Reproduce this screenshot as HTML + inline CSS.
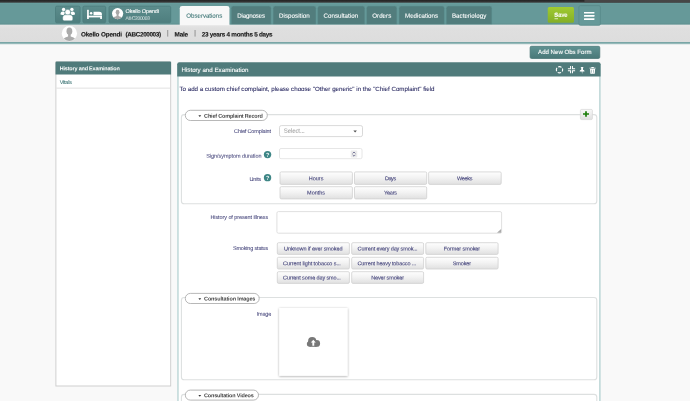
<!DOCTYPE html>
<html lang="en"><head><meta charset="utf-8"><title>Bahmni Clinical - Observations</title>
<style>
html,body{margin:0;padding:0}
body{width:690px;height:401px;overflow:hidden;position:relative;background:#f9f9f9;font-family:"Liberation Sans",sans-serif}
#bg{position:absolute;left:0;top:0;display:block;will-change:transform}
#txt{text-rendering:geometricPrecision}
#txt text{white-space:pre}

</style></head>
<body>
<svg id="bg" width="690" height="401" viewBox="0 0 690 401">
<defs>
<linearGradient id="gbtn" x1="0" y1="0" x2="0" y2="1"><stop offset="0" stop-color="#5c8d8d"/><stop offset="1" stop-color="#4e7e7e"/></linearGradient>
<linearGradient id="gsave" x1="0" y1="0" x2="0" y2="1"><stop offset="0" stop-color="#a0ca31"/><stop offset="1" stop-color="#84af26"/></linearGradient>
<linearGradient id="gadd" x1="0" y1="0" x2="0" y2="1"><stop offset="0" stop-color="#609292"/><stop offset="1" stop-color="#497878"/></linearGradient>
<linearGradient id="gw" x1="0" y1="0" x2="0" y2="1"><stop offset="0" stop-color="#fefefe"/><stop offset=".45" stop-color="#f3f3f3"/><stop offset="1" stop-color="#e0e0e0"/></linearGradient>
<linearGradient id="gplus" x1="0" y1="0" x2="0" y2="1"><stop offset="0" stop-color="#f8f8f8"/><stop offset="1" stop-color="#e0e0e0"/></linearGradient>
<linearGradient id="gbar" x1="0" y1="0" x2="0" y2="1"><stop offset="0" stop-color="#e5e5e5"/><stop offset=".25" stop-color="#dfdfdf"/><stop offset="1" stop-color="#dddddd"/></linearGradient>
<linearGradient id="gstrip" x1="0" y1="0" x2="0" y2="1"><stop offset="0" stop-color="#232323"/><stop offset="1" stop-color="#3d3d3d"/></linearGradient>
<filter id="sh" x="-10%" y="-10%" width="120%" height="125%"><feDropShadow dx="0" dy=".6" stdDeviation=".9" flood-color="#000" flood-opacity=".36"/></filter>
<clipPath id="c1"><circle cx="117.6" cy="13.6" r="5.6"/></clipPath>
<clipPath id="c2"><circle cx="69.4" cy="33.5" r="7.6"/></clipPath>
</defs>

<!-- ===== header ===== -->
<rect x="0" y="0" width="690" height="24.7" fill="#669999"/>
<rect x="0" y="23.7" width="690" height="1" fill="#5c8e8e"/>
<rect x="0" y="2.6" width="690" height=".8" fill="#6ca2a2"/>
<rect x="0" y="0" width="690" height="2.7" fill="url(#gstrip)"/>
<rect x="584.4" y="0" width="105.6" height="2.3" fill="#464646"/>

<!-- header buttons -->
<g stroke="#4b7c7c" stroke-width=".8" fill="url(#gbtn)">
<rect x="55.5" y="6.2" width="24.6" height="16.6" rx="1.4"/>
<rect x="82.9" y="6.2" width="22.8" height="16.6" rx="1.4"/>
<rect x="109" y="6.2" width="61.7" height="16.6" rx="1.4"/>
</g>
<!-- group icon -->
<g fill="#fff">
<circle cx="63.600" cy="9.400" r="1.700"/><circle cx="71.900" cy="9.400" r="1.700"/>
<path d="M60.500 14.500c-.2-1.900.9-3 2.400-3 1 0 1.800.5 2.100 1.300l-1 1.900q-1.800.6-3.500-.2zM75 14.500c.2-1.900-.9-3-2.400-3-1 0-1.800.5-2.100 1.300l1 1.900q1.800.6 3.500-.2z"/>
<circle cx="67.750" cy="12.200" r="2.850" stroke="#568787" stroke-width=".6"/>
<path d="M62.700 19.300v-1.700c0-1.700 1.300-2.800 2.900-2.800h4.300c1.600 0 2.900 1.100 2.900 2.800v1.700q0 1.400-1.500 1.400h-7.100q-1.500 0-1.500-1.400z" stroke="#568787" stroke-width=".4"/>
</g>
<!-- bed icon -->
<g fill="#fff">
<rect x="87.100" y="9.800" width="1.700" height="9.200"/>
<rect x="87.100" y="15.700" width="14.800" height="1.700"/>
<rect x="100.200" y="15.700" width="1.700" height="3.300"/>
<circle cx="91.100" cy="13.300" r="1.250"/>
<path d="M93.500 15.200v-3.500h5.700c1.600 0 2.700.9 2.700 2.300v1.200z"/>
</g>
<!-- patient avatar in button -->
<circle cx="117.6" cy="13.6" r="5.6" fill="#fff"/>
<g clip-path="url(#c1)" fill="#a8a8a8"><ellipse cx="117.600" cy="12.200" rx="1.900" ry="2.400"/><path d="M116.600 14h2v1.900c1.400.5 3 1 3.300 2v2h-8.600v-2c.3-1 1.900-1.500 3.300-2z"/></g>

<!-- tabs -->
<g fill="#527d7d" stroke="#5f9494" stroke-width=".5">
<path d="M231.200 24.400V8.200q0-2.200 2.200-2.200h35.500q2.200 0 2.200 2.200v16.200z"/>
<path d="M273.100 24.400V8.200q0-2.200 2.200-2.200h38.500q2.200 0 2.200 2.200v16.200z"/>
<path d="M317.600 24.400V8.200q0-2.200 2.200-2.200h42.800q2.200 0 2.200 2.200v16.200z"/>
<path d="M366.500 24.400V8.200q0-2.200 2.200-2.200h26q2.200 0 2.200 2.200v16.200z"/>
<path d="M399 24.400V8.200q0-2.200 2.200-2.200h41q2.200 0 2.200 2.200v16.200z"/>
<path d="M446.200 24.400V8.200q0-2.200 2.200-2.200h41.300q2.200 0 2.200 2.200v16.200z"/>
</g>

<!-- patient bar -->
<rect x="0" y="24.700" width="690" height="17.500" fill="url(#gbar)"/>
<rect x="0" y="42.100" width="690" height="1.700" fill="#6c9e9e"/>
<rect x="0" y="43.800" width="690" height=".7" fill="#cfdede"/>
<!-- active tab -->
<path d="M179.750 25.200V8.300q0-2.300 2.300-2.300h45.100q2.300 0 2.300 2.300v16.900z" fill="#f8f8f8"/>
<!-- avatar -->
<circle cx="69.4" cy="33.5" r="7.650" fill="#fff"/>
<g clip-path="url(#c2)" fill="#ababab"><ellipse cx="69.400" cy="31.200" rx="2.900" ry="3.600"/><path d="M68.100 33.900h2.600v2.500c1.900.7 4 1.300 4.400 2.700v3h-11.400v-3c.4-1.400 2.500-2 4.400-2.700z"/></g>
<rect x="167.300" y="30" width=".9" height="6.600" fill="#8a8a8a"/>
<rect x="194.600" y="30" width=".9" height="6.600" fill="#8a8a8a"/>

<!-- save -->
<rect x="547.750" y="6.900" width="26.250" height="15.850" rx="1.500" fill="url(#gsave)"/>
<!-- hamburger -->
<rect x="578.900" y="5.600" width="21.500" height="19.700" rx="1.500" fill="#669999" stroke="#588a8a" stroke-width=".8"/>
<g fill="#fff"><rect x="584" y="11.900" width="10.400" height="1.650" rx=".2"/><rect x="584" y="15.100" width="10.400" height="1.650" rx=".2"/><rect x="584" y="18.350" width="10.400" height="1.650" rx=".2"/></g>

<!-- add new obs form -->
<rect x="530.100" y="46.300" width="69.700" height="12.200" rx="1.400" fill="url(#gadd)" stroke="#437171" stroke-width=".7"/>

<!-- ===== sidebar ===== -->
<rect x="55.900" y="62" width="114.800" height="324" fill="#fff" stroke="#cbcbcb" stroke-width=".9"/>
<path d="M55.500 74.600V62.700q0-1.200 1.200-1.200h113.200q1.200 0 1.200 1.200v11.900z" fill="#507b7b"/>
<rect x="56.400" y="87.700" width="113.900" height=".8" fill="#d9d9d9"/>

<!-- ===== main panel ===== -->
<rect x="177.200" y="64" width="423.400" height="340" fill="#fff"/>
<rect x="177.200" y="64" width="1.500" height="340" fill="#bfd8d8"/>
<rect x="599.100" y="64" width="1.600" height="340" fill="#bfd8d8"/>
<path d="M177.200 76.500V64.200q0-2 2-2h419.400q2 0 2 2v12.300z" fill="#507b7b"/>
<!-- header icons -->
<circle cx="559.500" cy="69.750" r="3.150" fill="none" stroke="#fff" stroke-width="1.100" stroke-dasharray="3.500 1.450" stroke-dashoffset="1.750"/>
<g fill="#fff" transform="translate(567.900 66.100) scale(.9)"><path d="M0 2.400h2.400V0h1.100v3.500H0zM8 2.400H5.600V0H4.500v3.500H8zM0 5.600h2.400V8h1.100V4.500H0zM8 5.600H5.600V8H4.500V4.500H8z"/></g>
<path transform="translate(579.400 66.900) scale(.9)" fill="#fff" d="M1.500 0h3v.7l-.5.300v2.200c.9.300 1.600.900 1.700 1.800H3.400L3 7.800 2.600 5H.3c.1-.9.800-1.500 1.700-1.800V1l-.5-.3z"/>
<path transform="translate(589.500 67) scale(.88 .83)" fill="#fff" fill-rule="evenodd" d="M2.300 0h2.400l.4.800H7v1H0v-1h1.900zM.6 2.300h5.800L6 8H1zM2.100 3.300v3.700h.5V3.300zm2.300 0v3.700h.5V3.300z"/>

<!-- fieldset 1 -->
<rect x="181.400" y="114.600" width="415.400" height="89.200" rx="2.800" fill="none" stroke="#dde0e0" stroke-width="1.100"/>
<rect x="185.300" y="110.300" width="82" height="10.200" rx="5.100" fill="#fff" stroke="#a6a6a6" stroke-width=".8"/>
<path d="M198.400 115.200h2.800l-1.400 1.900z" fill="#333"/>
<rect x="580.400" y="109.400" width="12" height="10.200" rx="1.300" fill="url(#gplus)" stroke="#d6d6d6" stroke-width=".7"/>
<path transform="translate(583 111.150)" fill="#1b7d0a" d="M2.150 0h1.700v2H6v1.700H3.850v2H2.150v-2H0V2h2.150z"/>
<!-- select -->
<rect x="279.500" y="125.600" width="83" height="11" rx="1.800" fill="#fff" stroke="#cfcfcf" stroke-width=".8"/>
<path d="M353.400 130.500h3.500l-1.750 1.900z" fill="#505050"/>
<!-- duration input -->
<rect x="279.500" y="148.500" width="82.500" height="10.200" rx="1.500" fill="#fff" stroke="#dfdfdf" stroke-width=".8"/>
<rect x="350.750" y="150.600" width="6.500" height="6.900" rx=".8" fill="#ebebeb"/>
<path d="M352.600 153.400l1.400-1.400 1.400 1.400M352.600 154.800l1.400 1.400 1.400-1.400" fill="none" stroke="#66668c" stroke-width=".85"/>
<!-- question icons -->
<circle cx="267.550" cy="154.600" r="3.700" fill="#3e8686"/>
<circle cx="267.550" cy="177.650" r="3.700" fill="#3e8686"/>
<!-- unit buttons -->
<g fill="url(#gw)" stroke="#d1d1d1" stroke-width=".8">
<rect x="280" y="171.900" width="72.400" height="12.500" rx="1.300"/>
<rect x="354.500" y="171.900" width="72.200" height="12.500" rx="1.300"/>
<rect x="428.600" y="171.900" width="72.600" height="12.500" rx="1.300"/>
<rect x="280" y="186.700" width="72.400" height="12.200" rx="1.300"/>
<rect x="354.500" y="186.700" width="72.200" height="12.200" rx="1.300"/>
</g>

<!-- textarea -->
<rect x="276.900" y="211.600" width="224.700" height="21.600" rx="1.500" fill="#fff" stroke="#d8d8d8" stroke-width=".8"/>
<path d="M501.100 229.100v3.700h-4.100z" fill="#ababab"/>
<!-- smoking buttons -->
<g fill="url(#gw)" stroke="#d1d1d1" stroke-width=".8">
<rect x="277.300" y="242.700" width="72.100" height="11.700" rx="1.300"/>
<rect x="351.700" y="242.700" width="71.900" height="11.700" rx="1.300"/>
<rect x="425.800" y="242.700" width="72.300" height="11.700" rx="1.300"/>
<rect x="277.300" y="257.300" width="72.100" height="11.700" rx="1.300"/>
<rect x="351.700" y="257.300" width="71.900" height="11.700" rx="1.300"/>
<rect x="425.800" y="257.300" width="72.300" height="11.700" rx="1.300"/>
<rect x="277.300" y="271.700" width="72.100" height="11.700" rx="1.300"/>
<rect x="351.700" y="271.700" width="71.900" height="11.700" rx="1.300"/>
</g>

<!-- fieldset 2 -->
<rect x="181.400" y="297.500" width="415.400" height="82.300" rx="2.800" fill="none" stroke="#dde0e0" stroke-width="1.100"/>
<rect x="185.300" y="293.400" width="73.900" height="10.100" rx="5.050" fill="#fff" stroke="#a6a6a6" stroke-width=".8"/>
<path d="M198.400 298.200h2.800l-1.400 1.900z" fill="#333"/>
<rect x="279.200" y="308" width="68.400" height="67.800" fill="#fff" filter="url(#sh)"/>
<g fill="#787878"><circle cx="312.200" cy="341.200" r="4.100"/><circle cx="316.700" cy="343.400" r="3.400"/><circle cx="309.650" cy="344" r="2.800"/><rect x="309.600" y="343" width="7.100" height="3.800"/></g>
<path fill="#fff" d="M313.300 339.700l2.500 2.800h-1.550v3.200h-1.900v-3.200H310.800z"/>

<!-- fieldset 3 -->
<rect x="181.400" y="394.400" width="415.400" height="40" rx="2.800" fill="none" stroke="#dde0e0" stroke-width="1.100"/>
<rect x="185.300" y="390.100" width="73.200" height="10" rx="5" fill="#fff" stroke="#a6a6a6" stroke-width=".8"/>
<path d="M198.400 394.900h2.800l-1.400 1.900z" fill="#333"/>
<rect x="554.500" y="18.300" width="3.500" height=".9" fill="#fff" fill-opacity=".75"/>
<g id="txt" transform="matrix(1 0.0005 0 1 0 0)" font-family="Liberation Sans, sans-serif" lengthAdjust="spacing">
<text x="125.60" y="12.93" font-size="5.50" textLength="33.40" fill="#fff" stroke="#fff" stroke-width="0.09">Okello Opendi</text>
<text x="125.60" y="19.68" font-size="4.80" textLength="24.40" fill="rgba(255,255,255,.62)" stroke="rgba(255,255,255,.62)" stroke-width="0.09">ABC200003</text>
<text x="186.25" y="17.65" font-size="6.20" textLength="36.00" fill="#3f7777" stroke="#3f7777" stroke-width="0.09">Observations</text>
<text x="237.30" y="17.62" font-size="6.20" textLength="27.70" fill="#fff" stroke="#fff" stroke-width="0.09">Diagnoses</text>
<text x="279.00" y="17.60" font-size="6.20" textLength="30.75" fill="#fff" stroke="#fff" stroke-width="0.09">Disposition</text>
<text x="323.50" y="17.58" font-size="6.20" textLength="34.60" fill="#fff" stroke="#fff" stroke-width="0.09">Consultation</text>
<text x="372.25" y="17.56" font-size="6.20" textLength="19.00" fill="#fff" stroke="#fff" stroke-width="0.09">Orders</text>
<text x="405.00" y="17.54" font-size="6.20" textLength="33.10" fill="#fff" stroke="#fff" stroke-width="0.09">Medications</text>
<text x="451.90" y="17.52" font-size="6.20" textLength="34.35" fill="#fff" stroke="#fff" stroke-width="0.09">Bacteriology</text>
<text x="554.30" y="16.52" font-size="5.80" fill="#fff" stroke="#fff" stroke-width="0.2"><tspan font-weight="700">S</tspan>ave</text>
<text x="80.90" y="36.50" font-size="6.35" textLength="41.10" fill="#161616" font-weight="700" stroke="#161616" stroke-width="0.12">Okello Opendi</text>
<text x="125.60" y="36.48" font-size="6.35" textLength="35.40" fill="#161616" font-weight="700" stroke="#161616" stroke-width="0.12">(ABC200003)</text>
<text x="174.60" y="36.46" font-size="6.35" textLength="13.40" fill="#161616" font-weight="700" stroke="#161616" stroke-width="0.12">Male</text>
<text x="201.70" y="36.43" font-size="6.35" textLength="70.90" fill="#161616" font-weight="700" stroke="#161616" stroke-width="0.12">23 years 4 months 5 days</text>
<text x="538.10" y="53.72" font-size="6.10" textLength="53.40" fill="#fff" stroke="#fff" stroke-width="0.09">Add New Obs Form</text>
<text x="59.75" y="70.21" font-size="5.45" textLength="60.00" fill="#fff" font-weight="700">History and Examination</text>
<text x="59.75" y="83.97" font-size="5.50" textLength="12.15" fill="#3f7777" stroke="#3f7777" stroke-width="0.09">Vitals</text>
<text x="181.50" y="71.79" font-size="6.20" textLength="67.00" fill="#fff" stroke="#fff" stroke-width="0.09">History and Examination</text>
<text x="179.50" y="90.85" font-size="6.20" textLength="255.00" fill="#2f2f66" stroke="#2f2f66" stroke-width="0.09">To add a custom chief complaint, please choose &quot;Other generic&quot; in the &quot;Chief Complaint&quot; field</text>
<text x="204.10" y="117.63" font-size="5.45" textLength="58.70" fill="#454545" font-weight="700">Chief Complaint Record</text>
<text x="204.10" y="300.49" font-size="5.45" textLength="51.30" fill="#454545" font-weight="700">Consultation Images</text>
<text x="204.10" y="397.14" font-size="5.45" textLength="49.65" fill="#454545" font-weight="700">Consultation Videos</text>
<text x="234.10" y="132.97" font-size="5.50" textLength="36.90" fill="#45457b" stroke="#45457b" stroke-width="0.05">Chief Complaint</text>
<text x="283.75" y="132.60" font-size="6.10" textLength="21.00" fill="#a8a8a8" stroke="#a8a8a8" stroke-width="0.09">Select...</text>
<text x="206.25" y="157.63" font-size="5.50" textLength="55.35" fill="#45457b" stroke="#45457b" stroke-width="0.05">Sign/symptom duration</text>
<text x="249.50" y="180.87" font-size="5.50" textLength="11.75" fill="#45457b" stroke="#45457b" stroke-width="0.05">Units</text>
<text x="210.40" y="218.88" font-size="5.50" textLength="57.85" fill="#45457b" stroke="#45457b" stroke-width="0.05">History of present illness</text>
<text x="232.90" y="249.97" font-size="5.50" textLength="35.35" fill="#45457b" stroke="#45457b" stroke-width="0.05">Smoking status</text>
<text x="256.70" y="315.52" font-size="5.50" textLength="14.60" fill="#45457b" stroke="#45457b" stroke-width="0.05">Image</text>
<text x="266.10" y="156.67" font-size="5.60" textLength="2.90" fill="#fff" font-weight="700">?</text>
<text x="266.10" y="179.72" font-size="5.60" textLength="2.90" fill="#fff" font-weight="700">?</text>
<text x="308.73" y="180.09" font-size="5.50" textLength="14.75" fill="#3f3f78" stroke="#3f3f78" stroke-width="0.09">Hours</text>
<text x="384.93" y="180.05" font-size="5.50" textLength="11.25" fill="#3f3f78" stroke="#3f3f78" stroke-width="0.09">Days</text>
<text x="457.05" y="180.02" font-size="5.50" textLength="15.50" fill="#3f3f78" stroke="#3f3f78" stroke-width="0.09">Weeks</text>
<text x="307.10" y="194.44" font-size="5.50" textLength="18.00" fill="#3f3f78" stroke="#3f3f78" stroke-width="0.09">Months</text>
<text x="384.05" y="194.40" font-size="5.50" textLength="13.00" fill="#3f3f78" stroke="#3f3f78" stroke-width="0.09">Years</text>
<text x="284.05" y="250.44" font-size="5.50" textLength="58.50" fill="#3f3f78" stroke="#3f3f78" stroke-width="0.09">Unknown if ever smoked</text>
<text x="357.60" y="250.41" font-size="5.50" textLength="60.00" fill="#3f3f78" stroke="#3f3f78" stroke-width="0.09">Current every day smok...</text>
<text x="443.65" y="250.37" font-size="5.50" textLength="36.50" fill="#3f3f78" stroke="#3f3f78" stroke-width="0.09">Former smoker</text>
<text x="283.10" y="265.04" font-size="5.50" textLength="57.80" fill="#3f3f78" stroke="#3f3f78" stroke-width="0.09">Current light tobacco s...</text>
<text x="357.50" y="265.01" font-size="5.50" textLength="58.60" fill="#3f3f78" stroke="#3f3f78" stroke-width="0.09">Current heavy tobacco ...</text>
<text x="452.65" y="264.97" font-size="5.50" textLength="18.50" fill="#3f3f78" stroke="#3f3f78" stroke-width="0.09">Smoker</text>
<text x="283.10" y="279.44" font-size="5.50" textLength="57.80" fill="#3f3f78" stroke="#3f3f78" stroke-width="0.09">Current some day smo...</text>
<text x="371.23" y="279.41" font-size="5.50" textLength="32.75" fill="#3f3f78" stroke="#3f3f78" stroke-width="0.09">Never smoker</text>
</g>
</svg>

</body></html>
